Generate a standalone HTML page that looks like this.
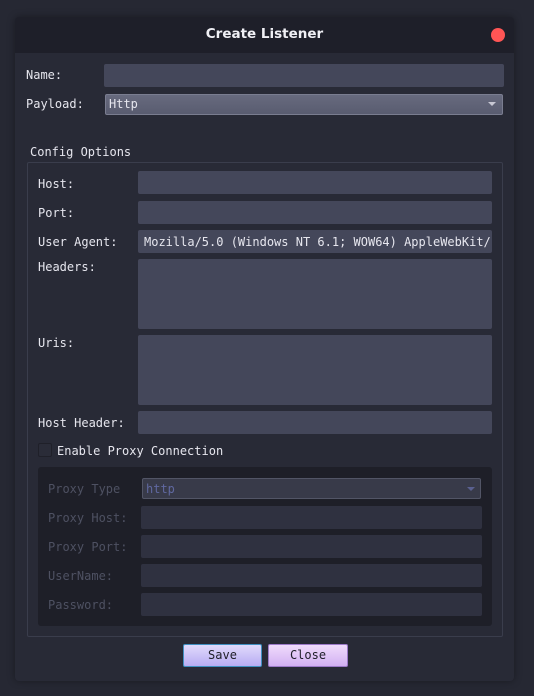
<!DOCTYPE html>
<html><head><meta charset="utf-8"><style>
*{margin:0;padding:0;box-sizing:border-box}
body{width:534px;height:696px;background:#262833;position:relative;overflow:hidden;font-family:"DejaVu Sans Mono","Liberation Mono",monospace;font-size:12px;color:#e6e6ee}
.a{position:absolute}
.win{left:15px;top:17px;width:499px;height:664px;background:#282a36;border-radius:4px;box-shadow:0 0 8px rgba(0,0,0,.35)}
.tb{left:15px;top:17px;width:499px;height:36px;background:#1e1f29;border-radius:4px 4px 0 0}
.title{left:15px;top:26px;width:499px;text-align:center;font-family:"DejaVu Sans","Liberation Sans",sans-serif;font-weight:bold;font-size:13.5px;color:#f0f0f5}
.dot{left:491px;top:28px;width:14px;height:14px;border-radius:50%;background:#ff5555}
.in{background:#44475a;border-radius:2px}
.lbl{line-height:14px}
.dis{color:#4e5162}
.din{background:#2f3140;border-radius:2px}
</style></head><body>
<div class="a win"></div>
<div class="a tb"></div>
<div class="a title">Create Listener</div>
<div class="a dot"></div>

<div class="a lbl" style="left:26px;top:68px">Name:</div>
<div class="a in" style="left:104px;top:64px;width:400px;height:23px"></div>
<div class="a lbl" style="left:26px;top:97px">Payload:</div>
<div class="a" style="left:105px;top:94px;width:398px;height:21px;background:linear-gradient(#676a7e,#595c70);border:1px solid #7a7d90;border-radius:2px"></div>
<div class="a lbl" style="left:109px;top:97px">Http</div>
<div class="a" style="left:488px;top:102px;width:0;height:0;border-left:4px solid transparent;border-right:4px solid transparent;border-top:4px solid #c8c8d4"></div>

<div class="a lbl" style="left:30px;top:145px">Config Options</div>
<div class="a" style="left:27px;top:162px;width:476px;height:475px;border:1px solid #3a3d4c;border-radius:2px"></div>

<div class="a lbl" style="left:38px;top:177px">Host:</div>
<div class="a in" style="left:138px;top:171px;width:354px;height:23px"></div>
<div class="a lbl" style="left:38px;top:206px">Port:</div>
<div class="a in" style="left:138px;top:201px;width:354px;height:23px"></div>
<div class="a lbl" style="left:38px;top:235px">User Agent:</div>
<div class="a in" style="left:138px;top:230px;width:354px;height:23px;overflow:hidden"><div style="position:absolute;left:6px;top:5px;white-space:nowrap;line-height:14px">Mozilla/5.0 (Windows NT 6.1; WOW64) AppleWebKit/</div></div>
<div class="a lbl" style="left:38px;top:260px">Headers:</div>
<div class="a in" style="left:138px;top:259px;width:354px;height:70px"></div>
<div class="a lbl" style="left:38px;top:336px">Uris:</div>
<div class="a in" style="left:138px;top:335px;width:354px;height:70px"></div>
<div class="a lbl" style="left:38px;top:416px">Host Header:</div>
<div class="a in" style="left:138px;top:411px;width:354px;height:23px"></div>

<div class="a" style="left:38px;top:443px;width:14px;height:14px;background:#2a2c38;border:1px solid #1f2029;border-radius:2px"></div>
<div class="a lbl" style="left:57px;top:444px">Enable Proxy Connection</div>

<div class="a" style="left:38px;top:467px;width:454px;height:159px;background:#1e1f28;border-radius:3px"></div>
<div class="a lbl dis" style="left:48px;top:482px">Proxy Type</div>
<div class="a" style="left:142px;top:478px;width:339px;height:21px;background:#383a49;border:1px solid #525566;border-radius:2px"></div>
<div class="a lbl" style="left:146px;top:482px;color:#6068a0">http</div>
<div class="a" style="left:467px;top:487px;width:0;height:0;border-left:4px solid transparent;border-right:4px solid transparent;border-top:4px solid #5a6090"></div>
<div class="a lbl dis" style="left:48px;top:511px">Proxy Host:</div>
<div class="a din" style="left:141px;top:506px;width:341px;height:23px"></div>
<div class="a lbl dis" style="left:48px;top:540px">Proxy Port:</div>
<div class="a din" style="left:141px;top:535px;width:341px;height:23px"></div>
<div class="a lbl dis" style="left:48px;top:569px">UserName:</div>
<div class="a din" style="left:141px;top:564px;width:341px;height:23px"></div>
<div class="a lbl dis" style="left:48px;top:598px">Password:</div>
<div class="a din" style="left:141px;top:593px;width:341px;height:23px"></div>

<div class="a" style="left:183px;top:644px;width:79px;height:23px;background:linear-gradient(#e0dafc,#b8acf2);border:1px solid #3f8fc0;border-radius:2px;color:#20202a;text-align:center;line-height:21px">Save</div>
<div class="a" style="left:268px;top:644px;width:80px;height:23px;background:linear-gradient(#f0dcfc,#d2b0f2);border:1px solid #9c7ac8;border-radius:2px;color:#20202a;text-align:center;line-height:21px">Close</div>
</body></html>
